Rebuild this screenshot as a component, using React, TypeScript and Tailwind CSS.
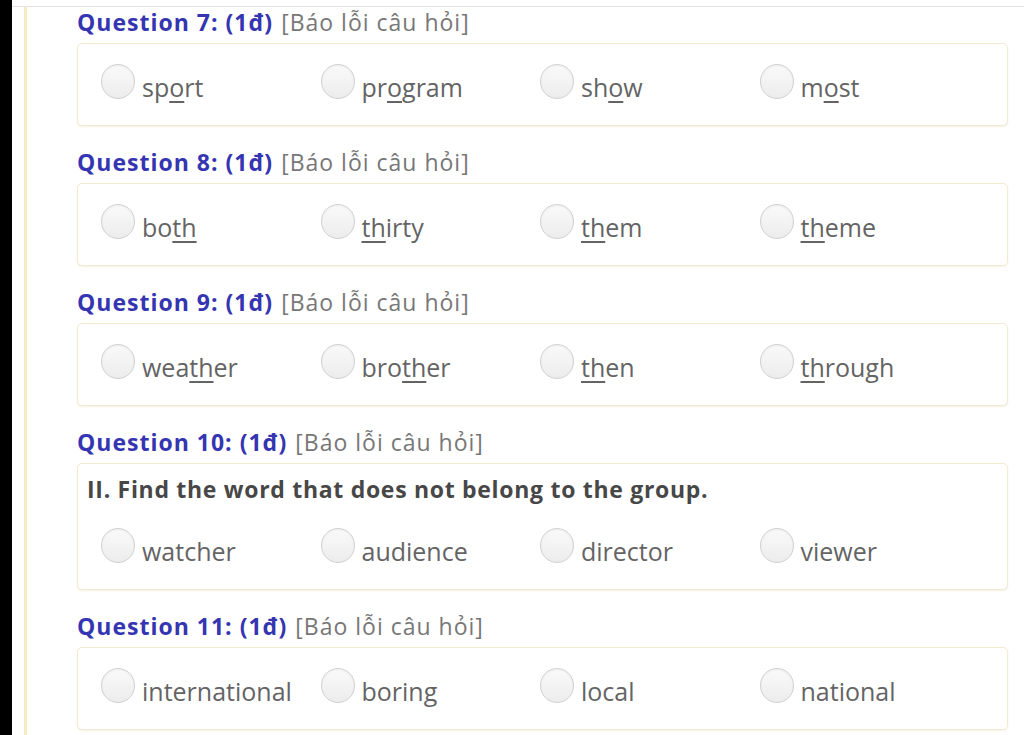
import React from 'react'

type Opt = {pre: string; u?: string; post?: string}

type Question = {
  no: number
  prompt?: string
  options: Opt[]
}

const questions: Question[] = [
  {
    no: 7,
    options: [
      {pre: 'sp', u: 'o', post: 'rt'},
      {pre: 'pr', u: 'o', post: 'gram'},
      {pre: 'sh', u: 'o', post: 'w'},
      {pre: 'm', u: 'o', post: 'st'},
    ],
  },
  {
    no: 8,
    options: [
      {pre: 'bo', u: 'th'},
      {pre: '', u: 'th', post: 'irty'},
      {pre: '', u: 'th', post: 'em'},
      {pre: '', u: 'th', post: 'eme'},
    ],
  },
  {
    no: 9,
    options: [
      {pre: 'wea', u: 'th', post: 'er'},
      {pre: 'bro', u: 'th', post: 'er'},
      {pre: '', u: 'th', post: 'en'},
      {pre: '', u: 'th', post: 'rough'},
    ],
  },
  {
    no: 10,
    prompt: 'II. Find the word that does not belong to the group.',
    options: [{pre: 'watcher'}, {pre: 'audience'}, {pre: 'director'}, {pre: 'viewer'}],
  },
  {
    no: 11,
    options: [{pre: 'international'}, {pre: 'boring'}, {pre: 'local'}, {pre: 'national'}],
  },
]

const Radio = () => (
  <span className="w-[34px] h-[35px] shrink-0 rounded-full border border-[#d2d2d2] bg-gradient-to-b from-[#fafafa] to-[#ececec] shadow-[inset_0_1px_2px_rgba(0,0,0,0.06)] -mt-[6px]" />
)

const Option = ({opt}: {opt: Opt}) => (
  <label className="flex items-center gap-[7px] w-[219.5px] cursor-pointer">
    <Radio />
    <span className="text-[25px] text-[#646464] leading-none mt-[6px]">
      {opt.pre}
      {opt.u && <span className="underline decoration-2 underline-offset-[4px]">{opt.u}</span>}
      {opt.post}
    </span>
  </label>
)

const QuestionBlock = ({q}: {q: Question}) => (
  <div className="mb-[22px]">
    <div className="h-[28px] flex items-center text-[23px] leading-none tracking-[1px]">
      <span className="font-bold text-[#3535b2]">
        Question {q.no}: (1đ)
      </span>
      <span className="ml-[8px] text-[#777]">[Báo lỗi câu hỏi]</span>
    </div>
    <div className="mt-[7px] border border-[#f3ead2] rounded-[5px] bg-white shadow-[0_1px_2px_rgba(230,220,190,0.4)]">
      {q.prompt && (
        <div className="pt-[12px] h-[44px] pl-[9px] text-[23px] tracking-[0.7px] font-bold text-[#474747] leading-[26px]">
          {q.prompt}
        </div>
      )}
      <div className="h-[81px] flex items-center pl-[23px]">
        {q.options.map((o, i) => (
          <Option key={i} opt={o} />
        ))}
      </div>
    </div>
  </div>
)

export default function App() {
  return (
    <div className="w-[1024px] h-[735px] overflow-hidden bg-white flex" style={{fontFamily: '"Open Sans", "Noto Sans", sans-serif'}}>
      <div className="w-[12px] bg-black shrink-0" />
      <div className="flex-1 flex flex-col">
        <div className="h-[7px] border-b border-[#e4e4e4] shrink-0" />
        <div className="flex flex-1">
          <div className="w-[12px] shrink-0" />
          <div className="w-[3px] bg-[#f6ecbf] shrink-0" />
          <div className="pl-[50px] w-[981px] pt-[1px]">
            {questions.map((q) => (
              <QuestionBlock key={q.no} q={q} />
            ))}
          </div>
        </div>
      </div>
    </div>
  )
}
